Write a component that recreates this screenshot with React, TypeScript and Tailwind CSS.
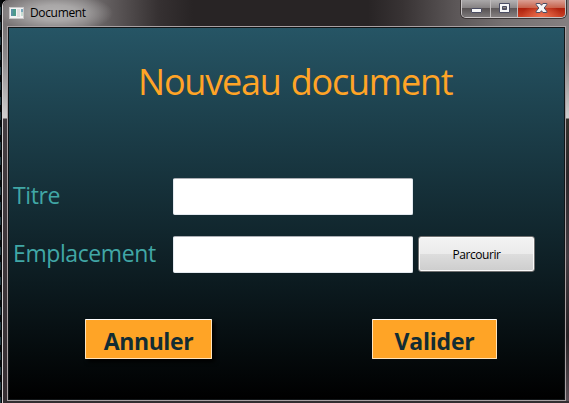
import React from "react";

function WindowIcon() {
  return (
    <svg width="15" height="13" viewBox="0 0 15 13" className="mt-[7px] ml-[6px] shrink-0">
      <rect x="0.5" y="0.5" width="14" height="11" fill="#f3f3f3" stroke="#c9c7c8" />
      <rect x="2" y="2" width="5" height="7" fill="#4c9a8b" />
      <rect x="2" y="2" width="2" height="7" fill="#5b91a5" />
      <rect x="8" y="2" width="3" height="8" fill="#dededf" />
      <rect x="12" y="2" width="2" height="3" fill="#79a9bd" />
      <rect x="12" y="5" width="2" height="4" fill="#c6ddd3" />
    </svg>
  );
}

function CaptionButtons() {
  return (
    <div className="mr-[3px] flex h-[18px] w-[105px] shrink-0 overflow-hidden rounded-b-[5px] border border-t-0 border-[#c8c4c5] shadow-[0_0_0_1px_#3b3535]">
      <div className="flex w-[29px] justify-center border-r border-[#c0bcbd] bg-[linear-gradient(#aaa8a9_0,#858182_8px,#565152_8px,#7c7879_100%)]">
        <svg width="13" height="17" viewBox="0 0 13 17">
          <rect x="1.5" y="8.5" width="10" height="4" rx="0.5" fill="#f6f6f6" stroke="#4b4d63" />
        </svg>
      </div>
      <div className="flex w-[27px] justify-center border-r border-[#c0bcbd] bg-[linear-gradient(#b5b3b4_0,#8c8889_8px,#5d5859_8px,#857f80_100%)]">
        <svg width="13" height="17" viewBox="0 0 13 17">
          <path fillRule="evenodd" d="M1.5 3.5h10v9h-10zM4.5 6.5h4v3h-4z" fill="#f6f6f6" stroke="#4b4d63" />
        </svg>
      </div>
      <div className="flex flex-1 justify-center bg-[radial-gradient(ellipse_at_50%_100%,#ee7250_0,transparent_60%),linear-gradient(#dba094_0,#c5604a_8px,#ad200c_8px,#c94125_100%)]">
        <svg width="13" height="17" viewBox="0 0 13 17">
          <path
            d="M1.2 3.5h3.9l1.4 1.8 1.4-1.8h3.9v1.2L9.2 8l2.6 3.3v1.2H7.9l-1.4-1.8-1.4 1.8H1.2v-1.2L3.8 8 1.2 4.7z"
            fill="#f6f6f6"
            stroke="#4b4d63"
          />
        </svg>
      </div>
    </div>
  );
}

function TitleBar() {
  return (
    <header className="flex h-[26px] w-full rounded-tl-[6px] bg-[radial-gradient(ellipse_58px_20px_at_52px_13px,#b3b1b1_0,#a9a7a7_40%,#a9a7a780_70%,#a9a7a700_100%),linear-gradient(90deg,#777374_0,#777374_80px,#595455_115px,#363132_155px,#282425_190px,#282425_365px,#383334_400px,#5a5556_450px,#767172_500px,#858081_569px)]">
      <WindowIcon />
      <span className="mt-[5px] ml-[6px] flex-1 text-[12px] leading-[16px] tracking-[-0.35px] text-black">Document</span>
      <CaptionButtons />
    </header>
  );
}

function OrangeButton({ children, className }: { children: React.ReactNode; className: string }) {
  return (
    <button
      className={
        "h-[40px] rounded-[1px] border border-[#ffe3bb] border-t-white bg-[#ffa426] pt-[4px] text-[23px] leading-[34px] font-bold text-[#122c33] " +
        className
      }
    >
      {children}
    </button>
  );
}

const field =
  "h-[37px] w-[240px] rounded-[2px] border border-[#e3e9ef] border-t-[#abadb3] bg-white outline-none";

const fieldLabel = "w-[160px] pl-[4px] text-[23px] leading-[35px] tracking-[-0.4px] text-[#41a7a6]";

export default function App() {
  return (
    <div className="flex h-[403px] w-[569px] overflow-hidden bg-black font-['Open_Sans','Noto_Sans',sans-serif]">
      <div className="w-[2px] shrink-0 bg-[linear-gradient(90deg,transparent_1px,#05080a_1px),repeating-linear-gradient(#05080a_0,#05080a_7px,#243b43_7px,#243b43_15px)]" />
      <div className="flex min-w-0 flex-1 flex-col rounded-tl-[6px] border-l border-[#d5d1d2] bg-[#332d30]">
        <TitleBar />
        <div className="flex h-[375px]">
          <div className="w-[4px] shrink-0 bg-[linear-gradient(#777374_0,#8b8889_30px,#d0cece_92px,#433c40_93px,#352e32_100%)]" />
          <main className="flex h-[375px] w-[559px] shrink-0 flex-col border border-[#a9a1a3]">
            <div className="flex flex-1 flex-col border border-[#101416] bg-[linear-gradient(#265565,#000)]">
              <h1 className="mt-[27px] ml-[129px] h-[54px] text-[36px] leading-[54px] tracking-[-1.22px] [word-spacing:2px] whitespace-nowrap text-[#ffa426]">
                Nouveau document
              </h1>
              <div className="mt-[69px] flex h-[37px]">
                <label className={fieldLabel}>Titre</label>
                <span className="w-[4px]" />
                <input className={field} />
              </div>
              <div className="mt-[21px] flex h-[37px]">
                <label className={fieldLabel}>Emplacement</label>
                <span className="w-[4px]" />
                <input className={field} />
                <button className="ml-[5px] h-[36px] w-[117px] rounded-[3px] border border-[#707070] bg-[linear-gradient(#f3f3f3_0,#ebebeb_50%,#dddddd_50%,#cdcdcd_100%)] pt-[2px] text-[12px] tracking-[-0.45px] text-black shadow-[inset_0_0_0_1px_#fafafa]">
                  Parcourir
                </button>
              </div>
              <div className="mt-[46px] flex pl-[76px]">
                <OrangeButton className="w-[127px] tracking-[-0.4px] shadow-[3px_3px_4px_#000]">Annuler</OrangeButton>
                <OrangeButton className="ml-[160px] w-[125px] tracking-[-0.2px]">Valider</OrangeButton>
              </div>
            </div>
          </main>
          <div className="flex-1 bg-[linear-gradient(#858081_0,#858081_30px,#d0cece_92px,#35322c_93px,#2c272a_150px,#443c42_230px,#282326_310px,#5a5057_100%)]" />
        </div>
      </div>
    </div>
  );
}
